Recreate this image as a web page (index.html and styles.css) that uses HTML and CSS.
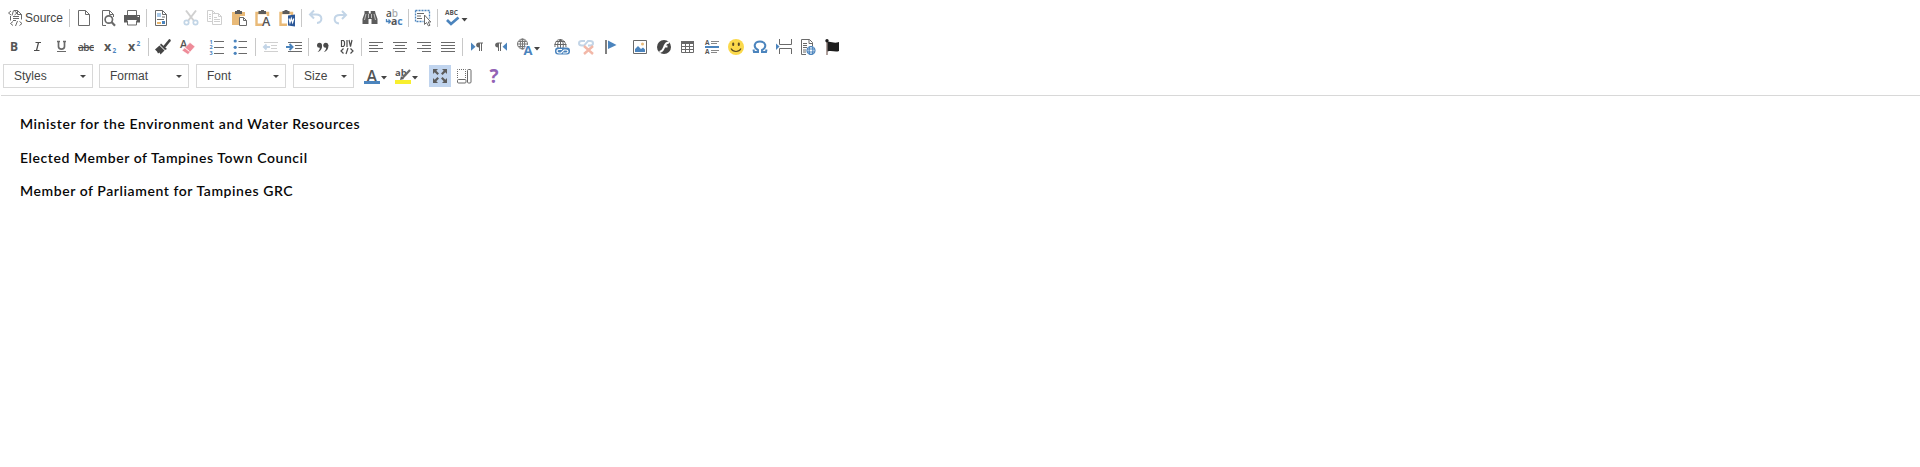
FILE: index.html
```
<!DOCTYPE html>
<html lang="en">
<head>
<meta charset="utf-8">
<title>Editor</title>
<link rel="stylesheet" href="styles.css">
</head>
<body>
<header class="toolbar">
  <div class="row">
    <span class="source"><svg class="icon" viewBox="0 0 24 24"><path class="l" d="M13 4.500h3.500l4 4v5M9.500 10v4.500M16.500 4.500v4h4M12 10.500h6M12 12.500h6M12 14.500h3"/><path class="l" d="M10 5L7.500 7l2.500 2M13.500 5L16 7l-2.500 2M12.500 4.500l-1.500 5M12 15.500L9.500 17.500l2.500 2M18.500 15.500l2.500 2-2.500 2M16.500 15l-2 5"/></svg>Source</span>
    <i class="sep"></i>
    <svg class="icon" viewBox="0 0 24 24"><path class="l" d="M6.500 4.500h7l4 4v11h-11zM13.500 4.500v4h4"/></svg>
    <svg class="icon" viewBox="0 0 24 24"><path class="l" d="M10 19.500H6.500v-15h7l4 4V11M13.500 4.500v4h4"/><circle class="l t2" cx="12.800" cy="13.500" r="3.700"/><path class="l t3" d="M15.500 16l3.500 3.700"/></svg>
    <svg class="icon" viewBox="0 0 24 24"><path class="f" d="M4 9h16v7.500h-3V14H7v2.500H4z"/><path class="l" d="M7.500 9V4.500h9V9M7.500 14.500v4.500h9v-4.500"/><path class="w" d="M17.500 10.500h1.500"/></svg>
    <i class="sep"></i>
    <svg class="icon" viewBox="0 0 24 24"><path class="l" d="M6.500 4.500h7l4 4v11h-11zM13.500 4.500v4h4M13 11h3M8 13.500h7"/><path fill="#a9c9e8" d="M8 7h4v4H8z"/><path fill="#4a83bd" d="M13 15h3v3h-3z"/><path fill="#e7b56b" d="M8 16h4v2H8z"/></svg>
    <i class="gap"></i>
    <svg class="icon" viewBox="0 0 24 24"><path stroke="#d0d0d0" stroke-width="2" fill="none" d="M7 4.500l8 10.500M17 4.500L9 15"/><g fill="none" stroke="#c2d5e6" stroke-width="1.700"><circle cx="7.500" cy="16.500" r="2.200"/><circle cx="16.500" cy="16.500" r="2.200"/></g></svg>
    <svg class="icon" viewBox="0 0 24 24"><g fill="none" stroke="#cfcfcf"><path d="M9 15.500H4.500v-11h5l3 3M9.500 4.500v3H12M6 8.500h2M6 10.500h2M6 12.500h2"/><path fill="#fff" d="M9.500 7.500h6l3 3v8h-9zM15.500 7.500v3h3M11 11.500h3M11 13.500h6M11 15.500h6"/></g></svg>
    <svg class="icon" viewBox="0 0 24 24"><path fill="#e9ba78" d="M5 6h13v4h-5v9H5z"/><path class="f" d="M8 5h2V4h3v1h2v3H8z"/><path class="l" fill="#fff" d="M12.500 11.500h4l3 3v5h-7zM16.500 11.500v3h3"/></svg>
    <svg class="icon" viewBox="0 0 24 24"><path fill="none" stroke="#e9ba78" stroke-width="2.400" d="M12 18.800H5.500V7h11.500v3"/><path class="f" d="M7.500 5H10V4h3v1h2v3H7.500z"/><text class="tx n" x="11" y="20" font-size="12.500">A</text></svg>
    <svg class="icon" viewBox="0 0 24 24"><path fill="none" stroke="#e9ba78" stroke-width="2.400" d="M12 18.800H5.500V7h11.500v2"/><path class="f" d="M7.500 5H9.500V4h3v1h2v3h-7z"/><path fill="#2b5797" d="M13 9.500l7-1v12l-7-1z"/><path fill="none" stroke="#fff" stroke-width="1.200" d="M14 12.500l1 4 1.300-4 1.300 4 1.200-4"/></svg>
    <i class="sep"></i>
    <svg class="icon" viewBox="0 0 24 24"><path fill="none" stroke="#c3d5e7" stroke-width="2" d="M10 4.500L6 8.500l4 4M6 8.500h6c7 0 7 8 1 8.500"/></svg>
    <svg class="icon" viewBox="0 0 24 24"><path fill="none" stroke="#c3d5e7" stroke-width="2" d="M14 5l4 4-4 4M18 9h-6c-7 0-7 8-1 8.500"/></svg>
    <i class="gap"></i>
    <svg class="icon" viewBox="0 0 24 24"><path class="f" d="M6.500 5h4.300v2.500h1.900V5H17l.5 2.500 2 5.500v5h-6v-5h-3v5h-6v-5l2-5.500z"/><path class="w" stroke-opacity=".6" d="M8 8l-1.500 6M16 8l1.500 6M10.500 8v4M13.500 8v4"/></svg>
    <svg class="icon" viewBox="0 0 24 24"><text class="tx n" x="4" y="11" font-size="10">a<tspan fill-opacity=".5">b</tspan></text><text class="tx" x="9" y="19" font-size="10.500">a<tspan fill="#4b84bd">c</tspan></text><path class="b" d="M4.500 13v2.500H8M6.500 13.500l2 2-2 2"/></svg>
    <i class="sep"></i>
    <svg class="icon" viewBox="0 0 24 24"><path class="b" stroke-dasharray="2 1" d="M4.500 4.500h14v8M4.500 4.500v11h8"/><path class="l" d="M6 7.500h7M6 10h4M6 12.500h5"/><path class="l" fill="#fff" d="M13.500 9v9.500l2-2 2 3.500 1.500-.8-1.800-3.200h2.600z"/></svg>
    <i class="sep"></i>
    <svg class="icon wide" viewBox="0 0 30 24"><text class="tx" x="5" y="9" font-size="6.500" textLength="13">ABC</text><path fill="none" stroke="#4b84bd" stroke-width="2.700" d="M7 14l4 4 7.500-6.500"/><path class="ar" d="M21.500 12h6L24.500 15.500z"/></svg>
  </div>

  <div class="row second">
    <svg class="icon" viewBox="0 0 24 24"><text class="tx" x="8" y="16" font-size="12">B</text></svg>
    <svg class="icon" viewBox="0 0 24 24"><path class="d" stroke-width="1.700" d="M9.500 7.500H15M8 15.500h5.500M12.500 7.500l-2 8"/></svg>
    <svg class="icon" viewBox="0 0 24 24"><path class="l t2" d="M8.500 6.500v5c0 3.500 6 3.500 6 0v-5M7 6.500h3M13 6.500h3"/><path class="l" d="M7 16.500h9"/></svg>
    <svg class="icon" viewBox="0 0 24 24"><text class="tx n" x="4" y="15.500" font-size="10" textLength="16">abc</text><path class="d" d="M4 12.500h16"/></svg>
    <svg class="icon" viewBox="0 0 24 24"><text class="tx" x="6" y="16" font-size="12.500">x</text><text class="tb" x="14.500" y="18" font-size="6.500">2</text></svg>
    <svg class="icon" viewBox="0 0 24 24"><text class="tx" x="6" y="16" font-size="12.500">x</text><text class="tb" x="14.500" y="10.500" font-size="6.500">2</text></svg>
    <i class="sep"></i>
    <svg class="icon" viewBox="0 0 24 24"><path fill="none" stroke="#444" stroke-width="2.600" stroke-linecap="round" d="M14 11l4.500-5.500"/><path fill="#444" d="M10 8.500l6 5.500-2 1-5-5z"/><path fill="#444" d="M8.500 10.500l5 5-4 4-1-2-1.500 1-1-2-2-2z"/></svg>
    <svg class="icon" viewBox="0 0 24 24"><text class="tx n" x="5" y="13" font-size="11">A</text><path fill="#ee8b98" stroke="#fff" stroke-width=".6" d="M15 7.500l5 4-7 8-6-4z"/><path stroke="#fff" d="M9.500 12.500l5 4"/></svg>
    <i class="gap"></i>
    <svg class="icon" viewBox="0 0 24 24"><path class="l" d="M9 6.500h10M9 12.500h10M9 18.500h10"/><text class="tb" x="4.500" y="8.500" font-size="5.500">1</text><text class="tb" x="4.500" y="14" font-size="5.500">2</text><text class="tb" x="4.500" y="19.800" font-size="5.500">3</text></svg>
    <svg class="icon" viewBox="0 0 24 24"><path class="l" d="M9.500 6.500H18M9.500 12.500H18M9.500 18.500H18"/><g fill="#4b84bd"><circle cx="6.200" cy="6" r="1.600"/><circle cx="6.200" cy="12.300" r="1.600"/><circle cx="6.200" cy="18.300" r="1.600"/></g></svg>
    <i class="sep"></i>
    <svg class="icon" viewBox="0 0 24 24"><path stroke="#d0d0d0" d="M6 7.500h14M13 10.500h6M13 13.500h6M6 16.500h14"/><path fill="none" stroke="#c3d5e7" stroke-width="2" d="M12 12H6M8.500 9.500L6 12l2.500 2.500"/></svg>
    <svg class="icon" viewBox="0 0 24 24"><path class="l" d="M6 7.500h14M13 10.500h7M13 13.500h7M6 16.500h14"/><path fill="none" stroke="#4b84bd" stroke-width="2" d="M4 12h6M7.500 9l3 3-3 3"/></svg>
    <i class="sep"></i>
    <svg class="icon" viewBox="0 0 24 24"><g fill="#4b4b4b"><circle cx="8.500" cy="10.300" r="2.500"/><circle cx="14.800" cy="10.300" r="2.500"/><path d="M11 10c.4 4-1.500 6.500-4.500 7 1.700-1.500 2.400-2.800 2.300-5zM17.300 10c.4 4-1.500 6.500-4.500 7 1.700-1.500 2.400-2.800 2.300-5z"/></g></svg>
    <svg class="icon" viewBox="0 0 24 24"><path class="d" d="M6.500 5.500v6h2l1-1.500V7l-1-1.500zM12 5v7M14 5l1.500 6.500L17 5M8.500 13.500L6 16l2.500 2.500M15.500 13.500L18 16l-2.500 2.500M13 13l-2 6"/></svg>
    <i class="sep"></i>
    <svg class="icon" viewBox="0 0 24 24"><path class="l" d="M5 7.500h14M5 10.500h9M5 13.500h14M5 16.500h9"/></svg>
    <svg class="icon" viewBox="0 0 24 24"><path class="l" d="M5 7.500h14M7 10.500h10M5 13.500h14M7 16.500h10"/></svg>
    <svg class="icon" viewBox="0 0 24 24"><path class="l" d="M5 7.500h14M10 10.500h9M5 13.500h14M10 16.500h9"/></svg>
    <svg class="icon" viewBox="0 0 24 24"><path class="l" d="M5 7.500h14M5 10.500h14M5 13.500h14M5 16.500h14"/></svg>
    <i class="sep"></i>
    <svg class="icon" viewBox="0 0 24 24"><path fill="#4b84bd" d="M6 7.500l4.500 4.200L6 15.800z"/><path fill="#666" d="M18 7.500v1h-1V16h-1V8.500h-1V16h-1v-3.500c-3.800 0-3.800-5 0-5z"/></svg>
    <svg class="icon" viewBox="0 0 24 24"><path fill="#4b84bd" d="M18 7.500l-4.500 4.200 4.500 4.100z"/><path fill="#666" d="M13 7.500v1h-1V16h-1V8.500h-1V16H9v-3.500c-3.800 0-3.800-5 0-5z"/></svg>
    <svg class="icon lang" viewBox="0 0 30 24"><g fill="none" stroke="#777"><circle cx="9.500" cy="9" r="5"/><ellipse cx="9.500" cy="9" rx="2.200" ry="5"/><path d="M9.500 4v10M4.500 9h10M5.500 6.500h8M5.500 11.500h8"/></g><text class="tb" x="10.500" y="20" font-size="13" stroke="#fff" stroke-width="2" paint-order="stroke">A</text><path class="ar" d="M21 12h6l-3 3.500z"/></svg>
    <i class="gap after-lang"></i>
    <svg class="icon" viewBox="0 0 24 24"><g fill="none" stroke="#666"><path d="M5 12C4 2 16 2 16 12M4.500 9.500h12M6 6.500h9M10.500 4v9M8 13c-1-4 0-7 2.500-8.500C13 6 14 9 13 13"/></g><rect x="5" y="12.500" width="15" height="7" rx="3" fill="#4b84bd"/><path fill="none" stroke="#fff" stroke-width="1.200" d="M12 14.500H9q-2 0-2 1.700T9 18h2l3-3h2q2 0 2 1.500T16 18h-3"/></svg>
    <svg class="icon" viewBox="0 0 24 24"><path fill="none" stroke="#c3d5e7" stroke-width="2" d="M11 6H8q-3 0-3 2.300t3 2.300h2l4-4.600h2q3 0 3 2.300t-3 2.300h-2"/><path stroke="#f2b8a8" stroke-width="2.400" d="M10 11l9 8M19 11l-9 8"/></svg>
    <svg class="icon" viewBox="0 0 24 24"><path class="l t2" d="M8 5v14"/><path fill="#4b84bd" d="M10 5.500l8.500 4.500-8.500 4z"/></svg>
    <i class="gap"></i>
    <svg class="icon" viewBox="0 0 24 24"><path class="l" d="M5.500 5.500h13v13h-13z"/><path fill="#4b84bd" d="M7 17v-3l3-3 3 3 2-1.500 2 2V17z"/><circle cx="14.500" cy="9" r="1.500" fill="#e9ba78"/></svg>
    <svg class="icon" viewBox="0 0 24 24"><circle cx="12" cy="12" r="7" fill="#464646"/><path fill="none" stroke="#fff" stroke-width="2" d="M17 7.500c-4 0-4 3-5 5s-1.500 4-4.500 4.500M11.500 11.500h4"/></svg>
    <svg class="icon" viewBox="0 0 24 24"><path fill="#666" d="M5 6h13v3H5z"/><path class="l" d="M5.500 6.500h12v11h-12zM5.500 11.500h12M5.500 14.500h12M9.500 9v8.500M13.500 9v8.500"/></svg>
    <svg class="icon" viewBox="0 0 24 24"><text class="tx" x="5" y="10" font-size="6.500">A</text><text class="tx" x="5" y="19" font-size="6.500">A</text><path stroke="#4b84bd" stroke-width="2" d="M5 12h14"/><path stroke="#888" d="M11 6.500h8M11 8.500h6M11 15.500h8M11 17.500h6"/></svg>
    <svg class="icon" viewBox="0 0 24 24"><circle cx="12" cy="12" r="8" fill="#fbd94b"/><path stroke="#5b4a22" stroke-width="2" stroke-linecap="round" d="M9.200 8.500v1.500M14.800 8.500v1.500"/><path fill="none" stroke="#5b4a22" stroke-width="1.200" d="M7 13.500c2 4 8 4 10 0"/></svg>
    <svg class="icon" viewBox="0 0 24 24"><path fill="none" stroke="#4b84bd" stroke-width="2" d="M5.500 14.500l.5 2.500h4v-2C4.500 12 6.500 6.500 12 6.500s7.500 5.500 2 8.500v2h4l.5-2.500"/></svg>
    <svg class="icon" viewBox="0 0 24 24"><path class="l" d="M7.500 4v5.500h12V4M7.500 19v-5.500h12V19"/><path fill="#4b84bd" d="M4 8.500l3.500 3L4 15z"/></svg>
    <svg class="icon" viewBox="0 0 24 24"><path class="l" d="M10 19.500H5.500v-15h8l3 3V11M13 4.500v4h4M7 8.500h4M7 10.500h4M7 12.500h4M7 15h3M7 17h3"/><g fill="#fff" stroke="#4b84bd" stroke-width="1.200"><circle cx="15" cy="15.500" r="4"/><path fill="none" d="M11 14h8M11 17h8"/><ellipse cx="15" cy="15.500" rx="1.900" ry="4" fill="none"/></g></svg>
    <svg class="icon" viewBox="0 0 24 24"><path stroke="#7a625b" stroke-width="1.200" d="M7 5v15"/><circle cx="7" cy="5.800" r="1.700" fill="#1d1d1d"/><path fill="#1d1d1d" d="M7.500 7c4-1 6 2 11.500 0v9c-4 1.500-7-1-11.500.5z"/></svg>
  </div>

  <div class="row third">
    <span class="combo styles">Styles<i class="arrow"></i></span>
    <span class="combo">Format<i class="arrow"></i></span>
    <span class="combo">Font<i class="arrow"></i></span>
    <span class="combo size">Size<i class="arrow"></i></span>
    <svg class="icon wide" viewBox="0 0 30 24"><text class="tx n" x="6.500" y="17.500" font-size="16">A</text><path fill="#4b84bd" d="M4 17h16v3H4z"/><path class="ar" d="M21 12h6l-3 3.500z"/></svg>
    <svg class="icon wide" viewBox="0 0 30 24"><text class="tx" x="5" y="12" font-size="9.500">ab</text><path class="l t3" d="M12.500 14L20 6"/><path class="f" d="M11 12l3 3-4 1z"/><path fill="#f8ef2e" d="M5 16h16v4H5z"/><path class="ar" d="M22 12h6l-3 3.500z"/></svg>
    <span class="maximize"><svg class="icon" viewBox="0 0 24 24"><path class="f" d="M5 5h5L8.300 6.700l2.700 2.700L9.400 11 6.700 8.300 5 10zM19 5h-5l1.700 1.700L13 9.400l1.600 1.600 2.700-2.700L19 10zM5 19h5l-1.700-1.700 2.700-2.700L9.400 13l-2.700 2.700L5 14zM19 19h-5l1.700-1.700-2.700-2.700 1.600-1.600 2.700 2.700L19 14z"/></svg></span>
    <svg class="icon blocks" viewBox="0 0 24 24"><path class="l" stroke-dasharray="1 1" d="M5.500 14V5.500h8V14"/><rect class="l" x="5.500" y="15.500" width="8.500" height="3.500" rx="1"/><rect class="l" x="15.500" y="5.500" width="3.500" height="13.500" rx="1"/></svg>
    <i class="gap"></i>
    <svg class="icon" viewBox="0 0 24 24"><text class="help" x="7.500" y="19" font-size="19">?</text></svg>
  </div>
</header>
<main class="document">
  <p class="line">Minister for the Environment and Water Resources</p>
  <p class="line">Elected Member of Tampines Town Council</p>
  <p class="line">Member of Parliament for Tampines GRC</p>
</main>
</body>
</html>
```
FILE: styles.css
```
body { margin: 0; background: #fff; font-family: "Liberation Sans", Arial, sans-serif; }
.toolbar { margin-left: 1px; border-bottom: 1px solid #d8d8d8; box-sizing: border-box; height: 96px; padding-top: 6px; }
.row { display: flex; height: 24px; margin-left: -1px; align-items: center; }
.second { margin-top: 5px; padding-left: 2px; }
.third { margin-top: 5px; padding-left: 3px; }
.icon { width: 24px; height: 24px; flex: none; display: block; }
.wide, .lang { width: 30px; }
.source { display: flex; align-items: center; width: 67px; font-size: 12px; color: #444; }
.source .icon { margin-left: 1px; }
.sep { width: 1px; height: 18px; margin: 0 2px; background: #c8c8c8; flex: none; }
.gap { width: 6px; flex: none; }
.after-lang { width: 7px; }
.combo { box-sizing: border-box; width: 90px; height: 24px; margin-right: 7px; padding: 0 6px 0 10px; border: 1px solid #d8d8d8; display: flex; align-items: center; justify-content: space-between; font-size: 12px; color: #444; background: #fff; }
.styles { margin-right: 6px; }
.size { width: 61px; margin-right: 6px; }
.arrow { border: 3px solid transparent; border-top-color: #444; border-bottom: 0; }
.maximize { width: 22px; height: 22px; margin: 0 2px 0 9px; background: #c0d4ee; display: flex; align-items: center; justify-content: center; }
.blocks { margin-left: -1px; }
.l { stroke: #6a6a6a; stroke-width: 1; }
.l:not([fill]) { fill: none; }
.d { fill: none; stroke: #4b4b4b; stroke-width: 1.2; }
.b { fill: none; stroke: #4b84bd; stroke-width: 1.3; }
.w { fill: none; stroke: #fff; stroke-width: 1; }
.f { fill: #5c5c5c; }
.t2 { stroke-width: 1.7; }
.t3 { stroke-width: 2.2; }
.ar { fill: #444; }
.tx { font-family: "Open Sans", sans-serif; font-weight: 700; fill: #555; }
.tx.n { font-weight: 600; }
.tb { font-family: "Open Sans", sans-serif; font-weight: 700; fill: #4b84bd; }
.help { font-family: "Open Sans", sans-serif; font-weight: 700; fill: #9263b5; }
.document { padding: 18px 20px; font-family: Lato, sans-serif; font-weight: 600; font-size: 14px; color: #080808; letter-spacing: 0.57px; }
.line { margin: 0 0 13.500px; line-height: 20px; }
```
